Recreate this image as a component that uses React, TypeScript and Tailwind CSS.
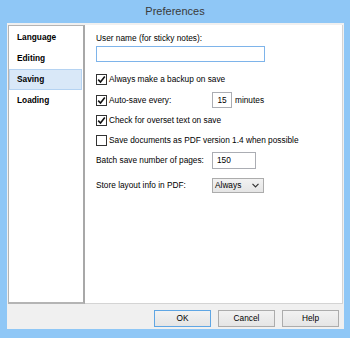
import React from "react";

function Check({ checked }: { checked: boolean }) {
  return (
    <span className="w-[11px] h-[11px] border border-[#333333] bg-white flex items-center justify-center shrink-0">
      {checked && (
        <svg width="9" height="9" viewBox="0 0 9 9">
          <path d="M1.2 4.6 L3.5 7 L7.8 1.6" fill="none" stroke="#111" strokeWidth="1.6" />
        </svg>
      )}
    </span>
  );
}

function Btn({ label, focus }: { label: string; focus?: boolean }) {
  return (
    <div
      className={`w-[57px] h-[17px] flex items-center justify-center text-[8.3px] text-black bg-gradient-to-b from-[#f2f2f2] to-[#e5e5e5] border ${
        focus ? "border-[#5fa6e4]" : "border-[#acacac]"
      }`}
    >
      {label}
    </div>
  );
}

export default function App() {
  const items = ["Language", "Editing", "Saving", "Loading"];
  return (
    <div
      className="w-[350px] h-[338px] bg-[#8fc7f6] flex flex-col"
      style={{ fontFamily: '"Liberation Sans", Arial, sans-serif' }}
    >
      <div className="h-[23px] flex items-center justify-center text-[11px] text-[#3a3a3a]">
        Preferences
      </div>
      <div className="ml-[7px] mr-[6px] mb-[9px] flex-1 bg-[#f0f0f0] flex flex-col pt-[2px] px-[1px]">
        <div className="h-[279px] flex">
          <div className="w-[77px] h-full bg-white border border-[#b4b4b4] border-r-2 border-b-2 border-r-[#a8a8a8] pt-[1px] pr-[1px]">
            {items.map((it) => (
              <div
                key={it}
                className={`h-[21px] flex items-center text-[8.3px] font-bold text-black ${
                  it === "Saving"
                    ? "bg-[#d9e8f8] border border-[#b5d3f2] pl-[7px]"
                    : "pl-[8px]"
                }`}
              >
                {it}
              </div>
            ))}
          </div>
          <div className="flex-1 h-full bg-white border-b border-r border-[#d4d4d4] pl-[11px] pt-[7px] text-[8.3px] text-black">
            <div className="h-[13px] flex items-center">User name (for sticky notes):</div>
            <div className="mt-[1px] w-[169px] h-[16px] border border-[#7eb4ea] bg-white" />
            <div className="mt-[10px] h-[14px] flex items-center gap-[2px]">
              <Check checked />
              <span>Always make a backup on save</span>
            </div>
            <div className="mt-[6px] h-[16px] flex items-center">
              <div className="w-[116px] flex items-center gap-[2px]">
                <Check checked />
                <span>Auto-save every:</span>
              </div>
              <div className="w-[20px] h-[16px] border border-[#abadb3] bg-white flex items-center justify-center">
                15
              </div>
              <span className="ml-[3px]">minutes</span>
            </div>
            <div className="mt-[5px] h-[14px] flex items-center gap-[2px]">
              <Check checked />
              <span>Check for overset text on save</span>
            </div>
            <div className="mt-[6px] h-[14px] flex items-center gap-[2px]">
              <Check checked={false} />
              <span>Save documents as PDF version 1.4 when possible</span>
            </div>
            <div className="mt-[5px] h-[17px] flex items-center">
              <span className="w-[116px]">Batch save number of pages:</span>
              <div className="w-[44px] h-[17px] border border-[#abadb3] bg-white flex items-center pl-[4px]">
                150
              </div>
            </div>
            <div className="mt-[9px] h-[15px] flex items-center">
              <span className="w-[116px]">Store layout info in PDF:</span>
              <div className="w-[52px] h-[15px] border border-[#acacac] bg-gradient-to-b from-[#f2f2f2] to-[#e5e5e5] flex items-center justify-between pl-[2px] pr-[4px]">
                <span>Always</span>
                <svg width="7" height="5" viewBox="0 0 7 5">
                  <path d="M0.5 0.8 L3.5 3.8 L6.5 0.8" fill="none" stroke="#333" strokeWidth="1.2" />
                </svg>
              </div>
            </div>
          </div>
        </div>
        <div className="mt-[6px] flex justify-end gap-[7px] pr-[4px]">
          <Btn label="OK" focus />
          <Btn label="Cancel" />
          <Btn label="Help" />
        </div>
      </div>
    </div>
  );
}
